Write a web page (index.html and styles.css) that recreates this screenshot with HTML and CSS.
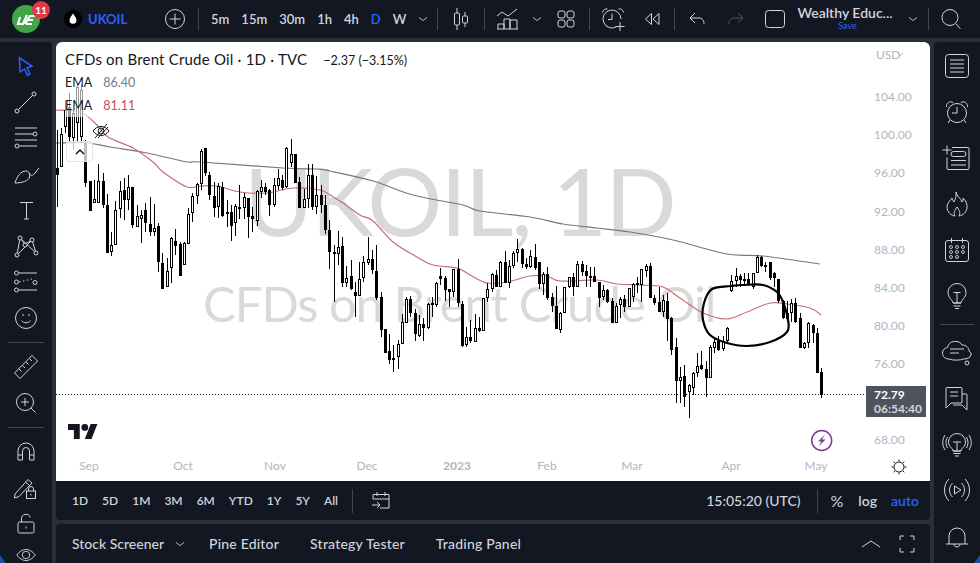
FILE: index.html
```html
<!doctype html>
<html lang="en">

<head>
    <meta charset="utf-8" />
    <link rel="icon" href="data:,">
    <meta name="viewport" content="width=device-width, initial-scale=1">
    <title>UKOIL</title>
    <link rel="stylesheet" href="styles.css">
</head>

<body>
    <div class="app">
        <header class="topbar">
            <div class="logo">
                <svg viewBox="0 0 28 28" width="28" height="28">
                    <circle cx="14" cy="14" r="14" fill="#43a548" />
                    <path d="M8 12l-2 7h5l4-9M13 19l5-8M15 15h6M14 19h6M17 11h6" fill="none" stroke="#fff" stroke-width="2.2" />
                </svg>
                <span class="badge">11</span>
            </div>
            <div class="symbol ml24">
                <span class="drop">
                    <svg viewBox="0 0 18 18" width="18" height="18">
                        <path d="M9 3.500c2 3 3.500 4.700 3.500 6.800a3.500 3.500 0 0 1-7 0c0-2.100 1.500-3.800 3.500-6.800z" fill="#fff" />
                    </svg>
                </span>
                <span class="ticker">UKOIL</span>
            </div>
            <svg class="ico ml34" viewBox="0 0 28 28"><circle cx="14" cy="14" r="9.500" /><path d="M14 8.500v11M8.500 14h11" /></svg>
            <span class="sep ml9"></span>
            <nav class="intervals ml12">
                <span>5m</span><span>15m</span><span>30m</span><span>1h</span><span>4h</span><span class="blue">D</span><span>W</span>
            </nav>
            <svg class="caret ml10" viewBox="0 0 16 28"><path d="M4 12.500l4 3 4-3" /></svg>
            <span class="sep ml6"></span>
            <svg class="ico ml9" viewBox="0 0 28 28"><path d="M10 3v5M10 20v5M18 7v4M18 18v4" /><rect x="7.500" y="8" width="5" height="12" rx="1" /><rect x="15.500" y="11" width="5" height="7" rx="1" /></svg>
            <span class="sep ml9"></span>
            <svg class="ico ml9" viewBox="0 0 28 28"><path d="M3 11l5-4 6 4 9-7" /><path d="M4 24v-5h6v5M10 24V14h6v10M16 24v-9h7v9M3 24h21" /></svg>
            <svg class="caret ml7" viewBox="0 0 16 28"><path d="M4 12.500l4 3 4-3" /></svg>
            <svg class="ico ml7" viewBox="0 0 28 28"><rect x="6" y="6" width="7" height="7" rx="2" /><rect x="15" y="6" width="7" height="7" rx="2" /><rect x="6" y="15" width="7" height="7" rx="2" /><rect x="15" y="15" width="7" height="7" rx="2" /></svg>
            <span class="sep ml9"></span>
            <svg class="ico ml9" viewBox="0 0 28 28"><path d="M18 21.500a9 9 0 1 1 4-7.500" /><path d="M13 8.500v6H9M3.500 7.500c.5-3 3-4 5-3.500M24.500 7.500c-.5-3-3-4-5-3.500M21 17v9M16.500 21.500h9" /></svg>
            <svg class="ico ml11" viewBox="0 0 28 28"><path d="M13.500 8.500L7.500 14l6 5.500zM21 8.500L15 14l6 5.500z" /></svg>
            <span class="sep ml8"></span>
            <svg class="ico ml8" viewBox="0 0 28 28"><path d="M12 8l-5 5 5 5M7 13h9c3 0 5 2 5 6" /></svg>
            <svg class="ico dim ml11" viewBox="0 0 28 28"><path d="M16 8l5 5-5 5M21 13h-9c-3 0-5 2-5 6" /></svg>
            <svg class="ico ml11" viewBox="0 0 28 28"><rect x="4.500" y="5.500" width="19" height="17" rx="3" /></svg>
            <div class="layout ml9">
                <span class="layout-name">Wealthy Educ...</span>
                <span class="layout-save">Save</span>
            </div>
            <svg class="caret ml13" viewBox="0 0 16 28"><path d="M4 12.500l4 3 4-3" /></svg>
            <span class="sep ml7"></span>
            <svg class="ico ml8" viewBox="0 0 28 28"><circle cx="13" cy="12.500" r="8" /><path d="M19 19l4.500 5" /></svg>
        </header>

        <aside class="tools">
            <svg class="ico active" viewBox="0 0 28 28"><path d="M7.500 6L20 14l-5 2 3 6-2.500 1.500-3-6.500L8 20z" /></svg>
            <svg class="ico" viewBox="0 0 28 28"><circle cx="5" cy="23" r="2" /><circle cx="22" cy="6" r="2" /><path d="M6.500 21.500l14-14" /></svg>
            <svg class="ico" viewBox="0 0 28 28"><path d="M3 4h22M3 10h18M3 16h22M7 22h18" /><circle cx="23" cy="10" r="2" /><circle cx="5" cy="22" r="2" /></svg>
            <svg class="ico" viewBox="0 0 28 28"><path d="M3 23c2-7 6-12 11-12 3 0 4 3 3.500 6-1 4-7.500 6-14.500 6zM17 13c1 3 4 3 6 0l4-5" /></svg>
            <svg class="ico" viewBox="0 0 28 28"><path d="M8 6.500h13M14.500 6.500V23M12 23h5" /></svg>
            <svg class="ico" viewBox="0 0 28 28"><path d="M8 6L5 23M20 8l4 13M8 6l16 15M20 8L5 23M8 6l5 6 7-4" /><circle class="dot" cx="8" cy="6" r="2" /><circle class="dot" cx="20" cy="8" r="2" /><circle class="dot" cx="13" cy="13" r="2" /><circle class="dot" cx="5" cy="23" r="2" /><circle class="dot" cx="24" cy="21" r="2" /></svg>
            <svg class="ico" viewBox="0 0 28 28"><path d="M7 5h18M7 22h18" /><path d="M7 14l13-3" stroke-dasharray="1.500 2.500" /><circle cx="4.500" cy="5" r="2" /><circle cx="4.500" cy="14" r="2" /><circle cx="4.500" cy="22" r="2" /><circle cx="23" cy="14.500" r="2" /></svg>
            <svg class="ico" viewBox="0 0 28 28"><circle cx="14" cy="14" r="10.500" /><path d="M9.500 16.500c2 3 7 3 9 0M11 10v2M17 10v2" /></svg>
            <span class="tool-sep"></span>
            <svg class="ico" viewBox="0 0 28 28"><path d="M2.500 20L20 2.500l5.500 5.500L8 25.500zM7 16l2.500 2.500M10.500 12.500l2.500 2.500M14 9l2.500 2.500M17.500 5.500L20 8" /></svg>
            <svg class="ico" viewBox="0 0 28 28"><circle cx="13" cy="13" r="8.500" /><path d="M19 19l4.500 4.500M13 9v8M9 13h8" /></svg>
            <span class="tool-sep"></span>
            <svg class="ico" viewBox="0 0 28 28"><path d="M6 22v-9a8 8 0 0 1 16 0v9h-4.500v-9a3.500 3.500 0 0 0-7 0v9zM6 17h4.500M17.500 17H22" /></svg>
            <svg class="ico" viewBox="0 0 28 28"><path d="M3 20L16 5.500 20 9 7 22.500l-4.500 1.500zM13.500 8l4 3.500" /><rect x="14.500" y="17" width="9" height="7.500" /><path d="M16.500 17v-2a2.500 2.500 0 0 1 5 0v2" /><path d="M19 20v1.500" /></svg>
            <svg class="ico" viewBox="0 0 28 28"><rect x="6" y="12" width="16" height="11" rx="1.500" /><path d="M9.500 12V9a4.500 4.500 0 0 1 8.800-1.500M14 16.500v2" /></svg>
            <svg class="ico tool-short" viewBox="0 0 28 28"><path d="M4 14c6-8 14-8 20 0-6 8-14 8-20 0z" /><circle cx="14" cy="14" r="4" /></svg>
        </aside>

        <div class="center">
            <main class="chart">
                <svg id="plot" class="plot" viewBox="56 42 874 439">
                    <text class="mark-big" x="244" y="236">UKOIL, 1D</text>
                    <text class="mark-small" x="203" y="322">CFDs on Brent Crude Oil</text>
                    <g id="ema"></g>
                    <g id="candles"></g>
                    <line class="last" x1="56" y1="394.500" x2="866" y2="394.500" />
                    <path id="circle" class="drawn" />
                    <path class="tv" transform="translate(68 424) scale(.84)" d="M14 18H7V7H0V0h14v18zM28 18h-8L27 0h8l-7 18z" />
                    <circle class="tv" cx="84.800" cy="427.400" r="3.400" />
                    <g id="axis"></g>
                    <text class="usd" x="876" y="59">USD</text>
                    <path class="usd-caret" d="M898 53.500l2.500 2 2.500-2" />
                    <rect class="tag" x="866" y="386" width="60" height="31" />
                    <text class="tag-price" x="874" y="399">72.79</text>
                    <text class="tag-time" x="874" y="413">06:54:40</text>
                    <circle class="bolt-ring" cx="821.700" cy="440.500" r="10" />
                    <path class="bolt" d="M825 434.500l-7 7h3.500l-3 5 7-7h-3.500z" />
                    <g class="sun">
                        <circle cx="899" cy="467" r="5" />
                        <path d="M899 459.500v2M899 472.500v2M891.500 467h2M904.500 467h2M893.700 461.700l1.500 1.500M902.800 470.800l1.500 1.500M893.700 472.300l1.500-1.500M902.800 463.200l1.500-1.500" />
                    </g>
                </svg>
                <div class="legend">
                    <div class="title">
                        <span class="title-name">CFDs on Brent Crude Oil · 1D · TVC</span>
                        <span class="title-change">−2.37 (−3.15%)</span>
                    </div>
                    <div class="study"><span>EMA</span><span class="study-grey">86.40</span></div>
                    <div class="study"><span>EMA</span><span class="study-red">81.11</span></div>
                    <svg class="eye-off" viewBox="0 0 20 20"><path d="M2 10c4-6 12-6 16 0-4 6-12 6-16 0z" /><circle cx="10" cy="10" r="3" /><path d="M4 17L16 3M7 17l10-11" /></svg>
                    <button class="collapse"><svg viewBox="0 0 12 8" width="12" height="8"><path d="M2 6l4-4 4 4" /></svg></button>
                </div>
            </main>
            <div class="ranges">
                <span>1D</span><span>5D</span><span>1M</span><span>3M</span><span>6M</span><span>YTD</span><span>1Y</span><span>5Y</span><span>All</span>
                <span class="sep sep-tall"></span>
                <svg class="ico goto" viewBox="0 0 28 28"><path d="M6 12V7.500h16V21h-9M10 5v4M18 5v4M6 12h16M5 18h8M10 15l3 3-3 3" /></svg>
                <div class="ranges-right">
                    <span class="clock">15:05:20 (UTC)</span>
                    <span class="sep sep-tall"></span>
                    <span class="percent">%</span>
                    <span>log</span>
                    <span class="blue">auto</span>
                </div>
            </div>
            <div class="panel">
                <span>Stock Screener</span>
                <svg class="caret" viewBox="0 0 16 28"><path d="M4 12.500l4 3 4-3" /></svg>
                <span class="panel-tab">Pine Editor</span>
                <span class="panel-tab">Strategy Tester</span>
                <span class="panel-tab">Trading Panel</span>
                <div class="panel-right">
                    <svg class="ico" viewBox="0 0 28 28"><path d="M5 17l9-6 9 6" /></svg>
                    <svg class="ico" viewBox="0 0 28 28"><path d="M7 10V6h4M17 6h4v4M21 18v4h-4M11 22H7v-4" /></svg>
                </div>
            </div>
        </div>

        <aside class="widgets">
            <svg class="ico" viewBox="0 0 28 28"><rect x="2.500" y="2.500" width="23" height="23" rx="3" /><path d="M7 8h14M7 12h14M7 16h14M7 20h14" /></svg>
            <svg class="ico" viewBox="0 0 28 28"><circle cx="14" cy="15" r="9.500" /><path d="M14 9v6h-5M3.500 9C3 5 7 2.500 10 4.500M24.500 9c.5-4-3.500-6.500-6.500-4.500M7 22l-2 3M21 22l2 3" /></svg>
            <svg class="ico" viewBox="0 0 28 28"><path d="M9 3.500h16a1 1 0 0 1 1 1v20a1 1 0 0 1-1 1H5a1 1 0 0 1-1-1v-11" /><rect x="8" y="7.500" width="15" height="5" rx="2.500" /><path d="M8 16.500h15M8 21h15M-.5 6h9M4 1.500v9" /></svg>
            <svg class="ico" viewBox="0 0 28 28"><path d="M13 2c1 5 5 6 6 10 1-1 1.500-2.500 1-4 3 3 4.500 6 4 10-.5 4-4 7.500-8 8 2-3 0-6-2-9-2 3-4 6-2 9-4-.5-8-4-8-9 0-4 3-6 5-9 .5 2 1 3 2 4 1.500-3 2.500-6 2-10z" /></svg>
            <svg class="ico" viewBox="0 0 28 28"><rect x="2.500" y="4.500" width="23" height="21" rx="2.500" /><path d="M8.500 2v5M19.500 2v5" /><g class="dots"><circle cx="8" cy="11" r="1.500" /><circle cx="14" cy="11" r="1.500" /><circle cx="20" cy="11" r="1.500" /><circle cx="8" cy="16" r="1.500" /><circle cx="14" cy="16" r="1.500" /><circle cx="20" cy="16" r="1.500" /><circle cx="8" cy="21" r="1.500" /><circle cx="14" cy="21" r="1.500" /></g></svg>
            <svg class="ico" viewBox="0 0 28 28"><path d="M10 21c0-3-5-5-5-10.500a9 9 0 0 1 18 0C23 16 18 18 18 21zM10 21h8M10.500 24h7M12 26.500h4M10.500 10.500h7M14 10.500V21" /></svg>
            <span class="widget-sep"></span>
            <svg class="ico wide" viewBox="0 0 32 28"><path d="M8 21c-4 0-6.500-2.500-6.500-6 0-3 2-5 5-5.500C7.500 5 11 3 15 3.500c3 0 5 1.500 6 3.500 4 0 7 2.500 7 6 1.500 1 2.500 2.500 2 4-1 3-4 4-7.500 4-3 1.500-11 1.500-14.500 0z" /><path d="M9 11h14M9 15h9" /><circle cx="26" cy="25" r="2" /></svg>
            <svg class="ico" viewBox="0 0 28 28"><path d="M19 17V4.500a1 1 0 0 0-1-1H4a1 1 0 0 0-1 1V24l5-5h10a1 1 0 0 0 1-1zM7 8h8M7 12h8M19 10h4a1 1 0 0 1 1 1v15l-5-5h-9" /></svg>
            <svg class="ico wide" viewBox="0 0 32 28"><path d="M12 21c0-3-4.500-4-4.500-9a8.500 8.500 0 0 1 17 0c0 5-4.500 6-4.500 9zM12 21h8M12.500 23.500h7M14 26h4M12 12h8M16 12v9M4 5C1 10 1 15 4 20M28 5c3 5 3 10 0 15M6.500 7c-2 4-2 7 0 11M25.500 7c2 4 2 7 0 11" /></svg>
            <svg class="ico wide" viewBox="0 0 32 28"><path d="M8 3C2 9 2 19 8 25M24 3c6 6 6 16 0 22M11.500 7c-4 4-4 10 0 14M20.500 7c4 4 4 10 0 14M13.500 10l6.500 4-6.500 4z" /></svg>
            <svg class="ico" viewBox="0 0 28 28"><path d="M3 22h22M6 22v-8a8 8 0 0 1 16 0v8M11 22c0 4 6 4 6 0" /></svg>
        </aside>
        <span class="corner corner-left"></span>
        <span class="corner corner-right"></span>
    </div>
    <script src="script.js"></script>
</body>

</html>
```

FILE: styles.css
```css
html {
    font-family: Lato, "Noto Sans", sans-serif;
    font-size: 14px;
}

body {
    margin: 0;
    background: #2a2e39;
    color: #d1d4dc;
    overflow: hidden;
}

.app {
    display: grid;
    grid-template-columns: 52px 874px 46px;
    grid-template-rows: 38px 521px;
    gap: 4px;
    width: 980px;
    height: 563px;
    overflow: hidden;
    position: relative;
}

.blue {
    color: #2962ff;
}

/* icons */
.ico {
    flex: none;
    width: 28px;
    height: 28px;
    fill: none;
    stroke: #d1d4dc;
    stroke-width: 1;
    overflow: visible;
}

.ico.wide {
    width: 32px;
}

.ico .dot {
    fill: #131722;
}

.ico .dots circle {
    stroke-width: .9;
}

.ico.dim {
    stroke: #50535e;
}

.ico.active {
    stroke: #2962ff;
    stroke-width: 1.5;
}

.caret {
    flex: none;
    width: 16px;
    height: 28px;
    fill: none;
    stroke: #b2b5be;
}

.sep {
    flex: none;
    width: 1px;
    height: 22px;
    background: #434651;
}

.sep-tall {
    height: 24px;
}

.ml6 { margin-left: 6px; }
.ml7 { margin-left: 7px; }
.ml8 { margin-left: 8px; }
.ml9 { margin-left: 9px; }
.ml10 { margin-left: 10px; }
.ml11 { margin-left: 11px; }
.ml12 { margin-left: 12px; }
.ml13 { margin-left: 13px; }
.ml24 { margin-left: 24px; }
.ml34 { margin-left: 34px; }

/* top bar */
.topbar {
    grid-column: 1 / 4;
    display: flex;
    align-items: center;
    padding-left: 12px;
    background: #131722;
}

.logo {
    position: relative;
    width: 28px;
    height: 28px;
    flex: none;
}

.badge {
    position: absolute;
    top: -4px;
    left: 20px;
    width: 18px;
    height: 18px;
    border-radius: 50%;
    background: #e2394a;
    color: #fff;
    font-size: 10px;
    font-weight: 700;
    line-height: 18px;
    text-align: center;
}

.symbol {
    display: flex;
    align-items: center;
    gap: 6px;
    flex: none;
    width: 63px;
}

.drop {
    display: block;
    width: 18px;
    height: 18px;
    border-radius: 50%;
    background: #000;
}

.ticker {
    color: #2962ff;
    font-size: 13px;
    font-weight: 700;
}

.intervals {
    display: flex;
    gap: 12px;
    flex: none;
    width: 194px;
    font-size: 13px;
    font-weight: 600;
}

.layout {
    display: flex;
    flex-direction: column;
    align-items: center;
    flex: none;
    width: 94px;
    white-space: nowrap;
}

.layout-name {
    font-size: 14px;
    font-weight: 600;
    line-height: 16px;
    margin-top: -3px;
}

.layout-save {
    padding-left: 5px;
    color: #2962ff;
    font-size: 9px;
    line-height: 10px;
}

/* side toolbars */
.tools,
.widgets {
    background: #131722;
    display: flex;
    flex-direction: column;
    align-items: center;
}

.tools {
    padding-top: 6px;
    border-top-right-radius: 4px;
}

.tools .ico {
    height: 36px;
    margin: 0;
}

.tools .tool-short {
    height: 26px;
}

.tool-sep {
    flex: none;
    width: 36px;
    height: 1px;
    margin: 6px 0;
    background: #434651;
}

.widgets {
    padding-top: 1px;
    border-top-left-radius: 4px;
}

.widgets .ico {
    height: 46px;
}

.widget-sep {
    flex: none;
    width: 34px;
    height: 1px;
    margin: 5px 0 4px;
    background: #434651;
}

/* chart */
.center {
    display: flex;
    flex-direction: column;
    min-width: 0;
}

.chart {
    position: relative;
    height: 439px;
    flex: none;
    background: #fff;
    border-radius: 6px 6px 0 0;
    overflow: hidden;
}

.plot {
    display: block;
    width: 874px;
    height: 439px;
    font-family: Lato, "Noto Sans", sans-serif;
}

.mark-big,
.mark-small {
    fill: #d9d9d9;
    font-family: Lato, sans-serif;
}

.mark-big {
    font-size: 94px;
    letter-spacing: -2px;
}

.mark-small {
    font-size: 49px;
    letter-spacing: -1px;
}

.ema-grey,
.ema-red,
.drawn {
    fill: none;
}

.ema-grey {
    stroke: #777;
    stroke-width: 1.200;
}

.ema-red {
    stroke: #c46f6f;
    stroke-width: 1.200;
}

.drawn {
    stroke: #000;
    stroke-width: 2.200;
}

.last {
    stroke: #131722;
    stroke-dasharray: 1 2;
}

.tv {
    fill: #131722;
}

.axis-price,
.axis-time,
.usd {
    fill: #b2b5be;
    font-size: 12px;
}

.axis-time {
    text-anchor: middle;
}

.axis-year {
    font-weight: 700;
}

.usd-caret {
    fill: none;
    stroke: #b2b5be;
}

.tag {
    fill: #50535e;
}

.tag-price,
.tag-time {
    font-size: 12px;
}

.tag-price {
    fill: #fff;
    font-weight: 700;
}

.tag-time {
    fill: #d1d4dc;
    font-weight: 700;
}

.bolt-ring {
    fill: #fff;
    stroke: #7e3794;
    stroke-width: 1.500;
}

.bolt {
    fill: #7e3794;
}

.sun {
    fill: none;
    stroke: #131722;
}

/* legend over the chart */
.legend {
    position: absolute;
    top: 0;
    left: 0;
    display: flex;
    flex-direction: column;
    align-items: flex-start;
    padding: 7px 0 0 9px;
    color: #131722;
}

.title {
    display: flex;
    align-items: baseline;
    gap: 16px;
    height: 22px;
    line-height: 20px;
    white-space: nowrap;
}

.title-name {
    font-size: 15px;
    letter-spacing: .2px;
}

.title-change {
    font-size: 12.5px;
}

.study {
    display: flex;
    gap: 11px;
    height: 23px;
    padding-right: 8px;
    background: rgba(255, 255, 255, .6);
    font-size: 12.5px;
    line-height: 24px;
}

.study-grey {
    color: #787b86;
}

.study-red {
    color: #c45059;
}

.eye-off {
    width: 20px;
    height: 20px;
    margin: 4px 0 0 26px;
    fill: none;
    stroke: #131722;
}

.collapse {
    width: 27px;
    height: 21px;
    margin: 0 0 0 1px;
    padding: 0;
    border: 1px solid #e0e3eb;
    border-radius: 3px;
    background: rgba(255, 255, 255, .75);
}

.collapse svg {
    display: block;
    margin: 0 auto;
    fill: none;
    stroke: #131722;
    stroke-width: 1.500;
}

/* bars below the chart */
.ranges,
.panel {
    display: flex;
    align-items: center;
    flex: none;
    height: 39px;
    padding-left: 16px;
    background: #131722;
    white-space: nowrap;
}

.ranges {
    gap: 14px;
    border-radius: 0 0 4px 4px;
    font-size: 12px;
    font-weight: 600;
}

.ranges-right {
    display: flex;
    align-items: center;
    gap: 14px;
    margin-left: auto;
    padding-right: 11px;
    font-size: 14px;
    font-weight: 600;
}

.clock {
    margin-right: 2px;
    font-weight: 500;
}

.percent {
    margin: 0 1px 0 -1px;
    font-size: 16px;
    font-weight: 400;
}

.panel {
    margin-top: 4px;
    border-radius: 4px 4px 0 0;
    font-size: 14px;
    font-weight: 500;
}

.panel .caret {
    margin-left: 8px;
}

.panel-tab {
    margin-left: 31px;
    letter-spacing: .2px;
}

.panel .caret + .panel-tab {
    margin-left: 21px;
}

.panel-right {
    display: flex;
    gap: 8px;
    margin-left: auto;
    padding-right: 9px;
}

.corner {
    position: absolute;
    bottom: 0;
    width: 6px;
    height: 8px;
    background: #1f4f9a;
}

.corner-left {
    left: 0;
    clip-path: polygon(0 0, 100% 100%, 0 100%);
}

.corner-right {
    right: 0;
    clip-path: polygon(100% 0, 100% 100%, 0 100%);
}
```

FILE: script.js
```js
// bars are read off the screenshot at 3x: [x, wickTop, bodyTop, bodyBottom, wickBottom, filled]
// each block has its own origin, page x = ox + x / 3, page y = oy + y / 3
const blocks = [
    {
        ox: 0, oy: 130, bars: [
            [170, 0, 115, 135, 230, 1], [182, -5, 12, 110, 110, 0], [194, -90, -60, -10, 10, 0], [206, -110, -70, 20, 40, 1],
            [218, -60, -50, 25, 60, 0], [232, -140, -130, -20, 35, 0], [244, -135, -120, 20, 40, 0], [256, 30, 40, 160, 172, 1],
            [271, 152, 152, 243, 243, 1], [283, 150, 208, 220, 220, 0], [295, 103, 152, 218, 218, 0], [310, 130, 153, 225, 233, 1],
            [322, 193, 225, 370, 370, 1], [334, 305, 345, 365, 378, 0], [346, 213, 240, 345, 345, 0], [361, 153, 182, 237, 265, 0],
            [373, 143, 180, 210, 270, 1], [385, 135, 172, 210, 240, 0], [397, 170, 170, 285, 295, 1], [412, 225, 258, 292, 292, 0],
            [424, 240, 255, 268, 340, 0], [436, 218, 240, 278, 305, 1], [451, 202, 282, 305, 318, 1], [463, 222, 295, 305, 318, 0],
            [475, 280, 288, 395, 425, 1], [487, 370, 400, 478, 478, 1], [502, 385, 423, 472, 472, 0], [514, 320, 323, 415, 460, 0],
            [526, 297, 333, 347, 375, 1], [541, 335, 342, 438, 438, 1], [553, 335, 340, 406, 406, 0], [565, 235, 253, 341, 341, 0],
            [577, 190, 198, 250, 275, 0], [592, 160, 163, 198, 222, 0], [604, 58, 62, 162, 180, 0], [616, 55, 55, 130, 137, 1],
            [628, 125, 135, 195, 210, 1], [643, 155, 198, 233, 260, 1], [655, 158, 168, 232, 265, 0], [667, 155, 170, 258, 262, 1],
            [682, 210, 247, 253, 290, 0], [694, 225, 247, 288, 333, 1], [706, 222, 228, 280, 318, 0], [718, 165, 230, 236, 268, 0],
            [733, 190, 202, 235, 268, 0], [745, 205, 205, 262, 325, 1], [757, 232, 258, 266, 305, 1], [772, 180, 183, 272, 287, 0],
            [784, 150, 170, 185, 205, 0], [796, 160, 172, 187, 195, 1], [808, 178, 180, 225, 257, 1], [823, 145, 165, 226, 230, 0],
            [835, 118, 145, 168, 180, 0], [847, 135, 150, 173, 180, 1], [859, 50, 55, 172, 175, 0], [874, 28, 72, 100, 110, 0],
            [886, 72, 72, 158, 158, 1], [898, 142, 157, 233, 233, 1], [913, 178, 207, 233, 233, 0], [925, 103, 135, 208, 233, 0],
            [937, 103, 135, 230, 240, 1], [949, 138, 195, 230, 252, 0], [964, 165, 195, 225, 250, 1], [976, 195, 225, 300, 313, 1],
            [988, 270, 300, 365, 418, 1]
        ]
    },
    {
        ox: 330, oy: 130, bars: [
            [13, 345, 365, 370, 517, 1], [25, 303, 350, 372, 405, 0], [37, 320, 348, 460, 472, 1], [49, 408, 445, 458, 472, 0],
            [64, 390, 438, 478, 480, 1], [76, 455, 487, 497, 560, 1], [88, 395, 447, 497, 497, 0], [100, 378, 397, 445, 455, 0],
            [115, 320, 388, 400, 405, 0], [127, 360, 388, 420, 433, 1], [139, 345, 423, 503, 510, 1], [154, 485, 502, 600, 620, 1],
            [166, 598, 598, 668, 670, 1], [178, 612, 663, 690, 702, 1], [190, 645, 685, 688, 725, 0], [205, 630, 643, 680, 718, 0],
            [217, 552, 577, 643, 643, 0], [229, 500, 508, 578, 580, 0], [241, 498, 508, 548, 560, 1], [256, 538, 548, 612, 632, 1],
            [268, 555, 582, 617, 622, 0], [280, 565, 582, 595, 632, 1], [295, 518, 522, 595, 597, 0], [307, 500, 520, 523, 560, 0],
            [319, 455, 460, 525, 530, 0], [331, 415, 438, 447, 465, 1], [346, 437, 445, 480, 512, 1], [358, 478, 478, 485, 530, 1],
            [370, 418, 418, 485, 500, 0], [385, 388, 418, 520, 532, 1], [397, 512, 522, 648, 650, 1], [409, 590, 622, 645, 652, 0],
            [421, 570, 622, 632, 640, 1], [436, 552, 595, 635, 635, 0], [448, 560, 595, 603, 605, 1], [460, 504, 504, 603, 603, 0],
            [472, 458, 478, 505, 515, 0], [487, 430, 433, 478, 485, 0], [499, 420, 435, 472, 472, 1], [511, 393, 397, 472, 472, 0],
            [526, 362, 397, 458, 458, 1], [538, 390, 408, 458, 475, 0], [550, 362, 368, 408, 415, 0], [562, 327, 358, 370, 395, 0],
            [577, 355, 358, 403, 415, 1], [589, 385, 403, 410, 418, 1], [601, 360, 378, 410, 415, 0], [616, 343, 380, 415, 420, 1],
            [628, 397, 397, 462, 478, 1], [640, 425, 432, 463, 495, 0], [652, 410, 433, 503, 510, 1], [667, 490, 502, 527, 545, 1],
            [679, 468, 527, 597, 597, 1], [691, 545, 550, 600, 610, 0], [703, 472, 472, 550, 550, 0], [718, 440, 442, 472, 475, 0],
            [730, 430, 440, 470, 497, 1], [742, 392, 403, 470, 470, 0], [757, 392, 403, 425, 437, 1], [769, 405, 423, 437, 470, 1],
            [781, 410, 437, 440, 470, 1], [793, 410, 438, 455, 455, 1], [808, 455, 455, 503, 532, 1], [820, 465, 480, 500, 510, 0],
            [832, 478, 480, 515, 520, 1], [847, 505, 513, 580, 580, 1], [859, 520, 527, 580, 580, 0], [871, 500, 507, 525, 565, 0],
            [883, 495, 507, 530, 545, 1], [898, 475, 475, 530, 530, 0]
        ]
    },
    {
        ox: 630, oy: 230, bars: [
            [10, 160, 163, 200, 215, 0], [22, 140, 160, 165, 190, 1], [34, 118, 118, 165, 215, 0], [49, 103, 108, 122, 140, 0],
            [61, 98, 108, 205, 205, 1], [73, 195, 205, 220, 225, 1], [88, 172, 215, 245, 245, 1], [100, 195, 210, 245, 262, 0],
            [112, 190, 213, 268, 333, 1], [124, 262, 265, 360, 375, 1], [139, 325, 352, 452, 520, 1], [151, 412, 442, 452, 518, 0],
            [163, 405, 438, 502, 530, 1], [178, 462, 465, 487, 565, 0], [190, 425, 430, 473, 495, 0], [202, 370, 408, 428, 440, 0],
            [214, 362, 405, 417, 420, 1], [229, 392, 417, 445, 502, 1], [241, 345, 350, 443, 443, 0], [253, 325, 335, 355, 368, 0],
            [265, 317, 333, 360, 363, 1], [280, 317, 333, 358, 363, 0], [292, 290, 295, 332, 335, 0], [304, 135, 152, 182, 185, 0],
            [319, 115, 138, 152, 172, 0], [331, 132, 137, 150, 170, 1], [343, 130, 148, 152, 168, 1], [355, 128, 148, 165, 168, 1],
            [370, 128, 128, 170, 176, 0], [382, 75, 80, 130, 130, 0], [394, 78, 80, 108, 110, 1], [406, 95, 105, 112, 125, 0],
            [421, 97, 97, 143, 150, 1], [433, 125, 130, 143, 172, 1], [445, 147, 147, 212, 218, 1], [460, 210, 212, 265, 268, 1],
            [472, 212, 250, 267, 270, 0], [484, 207, 220, 248, 275, 0], [496, 205, 218, 275, 278, 1], [511, 250, 265, 355, 355, 1],
            [523, 335, 338, 353, 358, 0], [535, 275, 280, 340, 355, 0], [550, 282, 285, 308, 338, 1], [562, 295, 310, 428, 428, 1],
            [574, 415, 425, 495, 505, 1]
        ]
    }
];

const emaGrey = [[56, 143], [87, 143], [110, 147], [147, 153], [187, 162], [200, 162], [283, 168], [317, 169], [330, 171],
    [373, 181], [413, 195], [463, 205], [480, 211], [530, 217], [563, 224], [597, 228], [630, 232], [673, 240], [727, 254],
    [763, 256], [820, 264]];

const emaRed = [[56, 110], [80, 112], [95, 123], [108, 137], [133, 148], [153, 162], [163, 172], [187, 187], [200, 186],
    [217, 186], [240, 192], [267, 193], [293, 188], [320, 190], [330, 195], [343, 203], [360, 215], [373, 221], [393, 242],
    [417, 257], [433, 265], [457, 268], [470, 275], [487, 283], [507, 282], [530, 276], [547, 276], [560, 281], [597, 280],
    [617, 284], [640, 285], [663, 287], [680, 298], [703, 313], [727, 319], [747, 312], [770, 303], [787, 304], [810, 308],
    [821, 315]];

const hand = [[730, 286], [712, 289], [704, 303], [703, 320], [710, 335], [727, 343], [747, 346], [770, 342], [787, 332],
    [788, 320], [783, 302], [777, 292], [763, 285], [743, 285], [730, 286]];

const prices = [['104.00', 96], ['100.00', 134], ['96.00', 172.5], ['92.00', 211], ['88.00', 249], ['84.00', 287],
    ['80.00', 325], ['76.00', 363], ['68.00', 439]];

const months = [['Sep', 89], ['Oct', 183], ['Nov', 275], ['Dec', 367], ['2023', 457], ['Feb', 547], ['Mar', 632], ['Apr', 731], ['May', 816]];

const NS = 'http://www.w3.org/2000/svg';

function el(parent, name, attrs, text) {
    const node = document.createElementNS(NS, name);
    Object.keys(attrs).forEach(key => node.setAttribute(key, attrs[key]));
    if (text) {
        node.textContent = text;
    }
    parent.appendChild(node);
    return node;
}

// catmull-rom through the points, as cubic beziers
function smooth(points) {
    let d = `M${points[0][0]} ${points[0][1]}`;
    for (let i = 0; i < points.length - 1; i++) {
        const p0 = points[i - 1] || points[i];
        const p1 = points[i];
        const p2 = points[i + 1];
        const p3 = points[i + 2] || p2;
        const c1x = p1[0] + (p2[0] - p0[0]) / 6;
        const c1y = p1[1] + (p2[1] - p0[1]) / 6;
        const c2x = p2[0] - (p3[0] - p1[0]) / 6;
        const c2y = p2[1] - (p3[1] - p1[1]) / 6;
        d += `C${c1x.toFixed(1)} ${c1y.toFixed(1)} ${c2x.toFixed(1)} ${c2y.toFixed(1)} ${p2[0]} ${p2[1]}`;
    }
    return d;
}

const candles = document.querySelector('#candles');
blocks.forEach(block => {
    block.bars.forEach(([x, wickTop, bodyTop, bodyBottom, wickBottom, filled]) => {
        const px = Math.round(block.ox + x / 3);
        const y = v => Math.round(block.oy + v / 3);
        const top = y(bodyTop);
        const height = Math.max(y(bodyBottom) - top, 2);
        el(candles, 'rect', {
            x: px, y: y(wickTop), width: 1, height: y(wickBottom) - y(wickTop),
            fill: '#000', 'shape-rendering': 'crispEdges'
        });
        if (filled) {
            el(candles, 'rect', { x: px - 1, y: top, width: 3, height, fill: '#000', 'shape-rendering': 'crispEdges' });
        } else {
            el(candles, 'rect', {
                x: px - 0.5, y: top + 0.5, width: 2, height: height - 1,
                fill: '#fff', stroke: '#000', 'shape-rendering': 'crispEdges'
            });
        }
    });
});

const ema = document.querySelector('#ema');
el(ema, 'path', { class: 'ema-grey', d: smooth(emaGrey) });
el(ema, 'path', { class: 'ema-red', d: smooth(emaRed) });
document.querySelector('#circle').setAttribute('d', smooth(hand));

const axis = document.querySelector('#axis');
prices.forEach(([label, y]) => el(axis, 'text', { class: 'axis-price', x: 874, y: y + 4.5 }, label));
months.forEach(([label, x]) => {
    const cls = label === '2023' ? 'axis-time axis-year' : 'axis-time';
    el(axis, 'text', { class: cls, x, y: 470 }, label);
});
```
